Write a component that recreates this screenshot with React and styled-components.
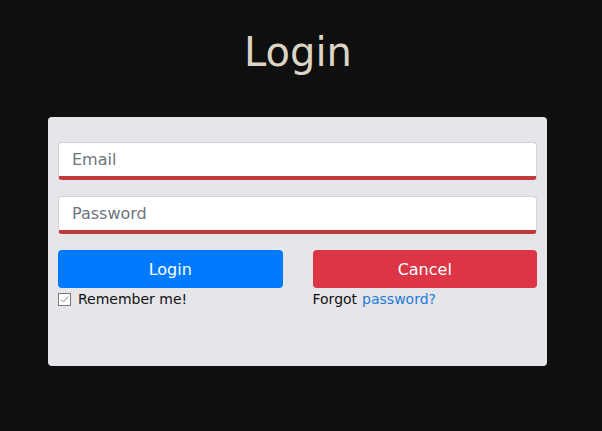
import React from "react";
import styled, { createGlobalStyle } from "styled-components";

const GlobalStyle = createGlobalStyle`
  html, body {
    margin: 0;
    padding: 0;
    background: #0f0f0f;
    font-family: "DejaVu Sans", Verdana, sans-serif;
  }
`;

const Page = styled.div`
  width: 602px;
  height: 431px;
  background: #0f0f0f;
  display: flex;
  flex-direction: column;
  align-items: center;
`;

const Title = styled.h1`
  margin: 28px 6px 0 0;
  height: 89px;
  font-size: 40px;
  font-weight: 400;
  line-height: 48px;
  color: #dcd4c4;
`;

const Card = styled.form`
  box-sizing: border-box;
  width: 499px;
  height: 249px;
  margin-left: -7px;
  padding: 25px 10px 0;
  background: #e6e5ea;
  border-radius: 4px;
  display: flex;
  flex-direction: column;
  gap: 16px;
`;

const Input = styled.input`
  box-sizing: border-box;
  width: 100%;
  height: 38px;
  padding: 0 13px;
  border: 1px solid #ced4da;
  border-bottom: 4px solid #c03a3b;
  border-radius: 4px;
  background: #fff;
  font-family: "DejaVu Sans", Verdana, sans-serif;
  font-size: 16px;
  outline: none;

  &::placeholder {
    color: #6c757d;
  }
`;

const Actions = styled.div`
  display: grid;
  grid-template-columns: 1fr 1fr;
  column-gap: 30px;
`;

const Column = styled.div`
  display: flex;
  flex-direction: column;
  gap: 2px;
`;

const Button = styled.button`
  height: 38px;
  border: none;
  border-radius: 4px;
  background: ${(p) => (p.danger ? "#dc3545" : "#007bff")};
  color: #fff;
  font-family: "DejaVu Sans", Verdana, sans-serif;
  font-size: 16px;
  cursor: pointer;
`;

const Note = styled.label`
  display: flex;
  align-items: center;
  gap: 7px;
  font-size: 14px;
  line-height: 18px;
  color: #111;
`;

const CheckBox = styled.span`
  box-sizing: border-box;
  width: 13px;
  height: 13px;
  border: 1px solid #7a7a7a;
  background: #fff;
  display: inline-flex;
  align-items: center;
  justify-content: center;
`;

const Link = styled.a`
  color: #1c7bd9;
  text-decoration: none;
  margin-left: 5px;
`;

export default function App() {
  return (
    <>
      <GlobalStyle />
      <Page>
        <Title>Login</Title>
        <Card onSubmit={(e) => e.preventDefault()}>
          <Input type="email" placeholder="Email" />
          <Input type="password" placeholder="Password" />
          <Actions>
            <Column>
              <Button type="submit">Login</Button>
              <Note>
                <CheckBox>
                  <svg width="9" height="9" viewBox="0 0 9 9">
                    <path d="M1 4.5 L3.5 7 L8 1.5" fill="none" stroke="#8a8a8a" strokeWidth="1" />
                  </svg>
                </CheckBox>
                Remember me!
              </Note>
            </Column>
            <Column>
              <Button type="button" danger>
                Cancel
              </Button>
              <Note as="div">
                <span>
                  Forgot<Link href="#">password?</Link>
                </span>
              </Note>
            </Column>
          </Actions>
        </Card>
      </Page>
    </>
  );
}
